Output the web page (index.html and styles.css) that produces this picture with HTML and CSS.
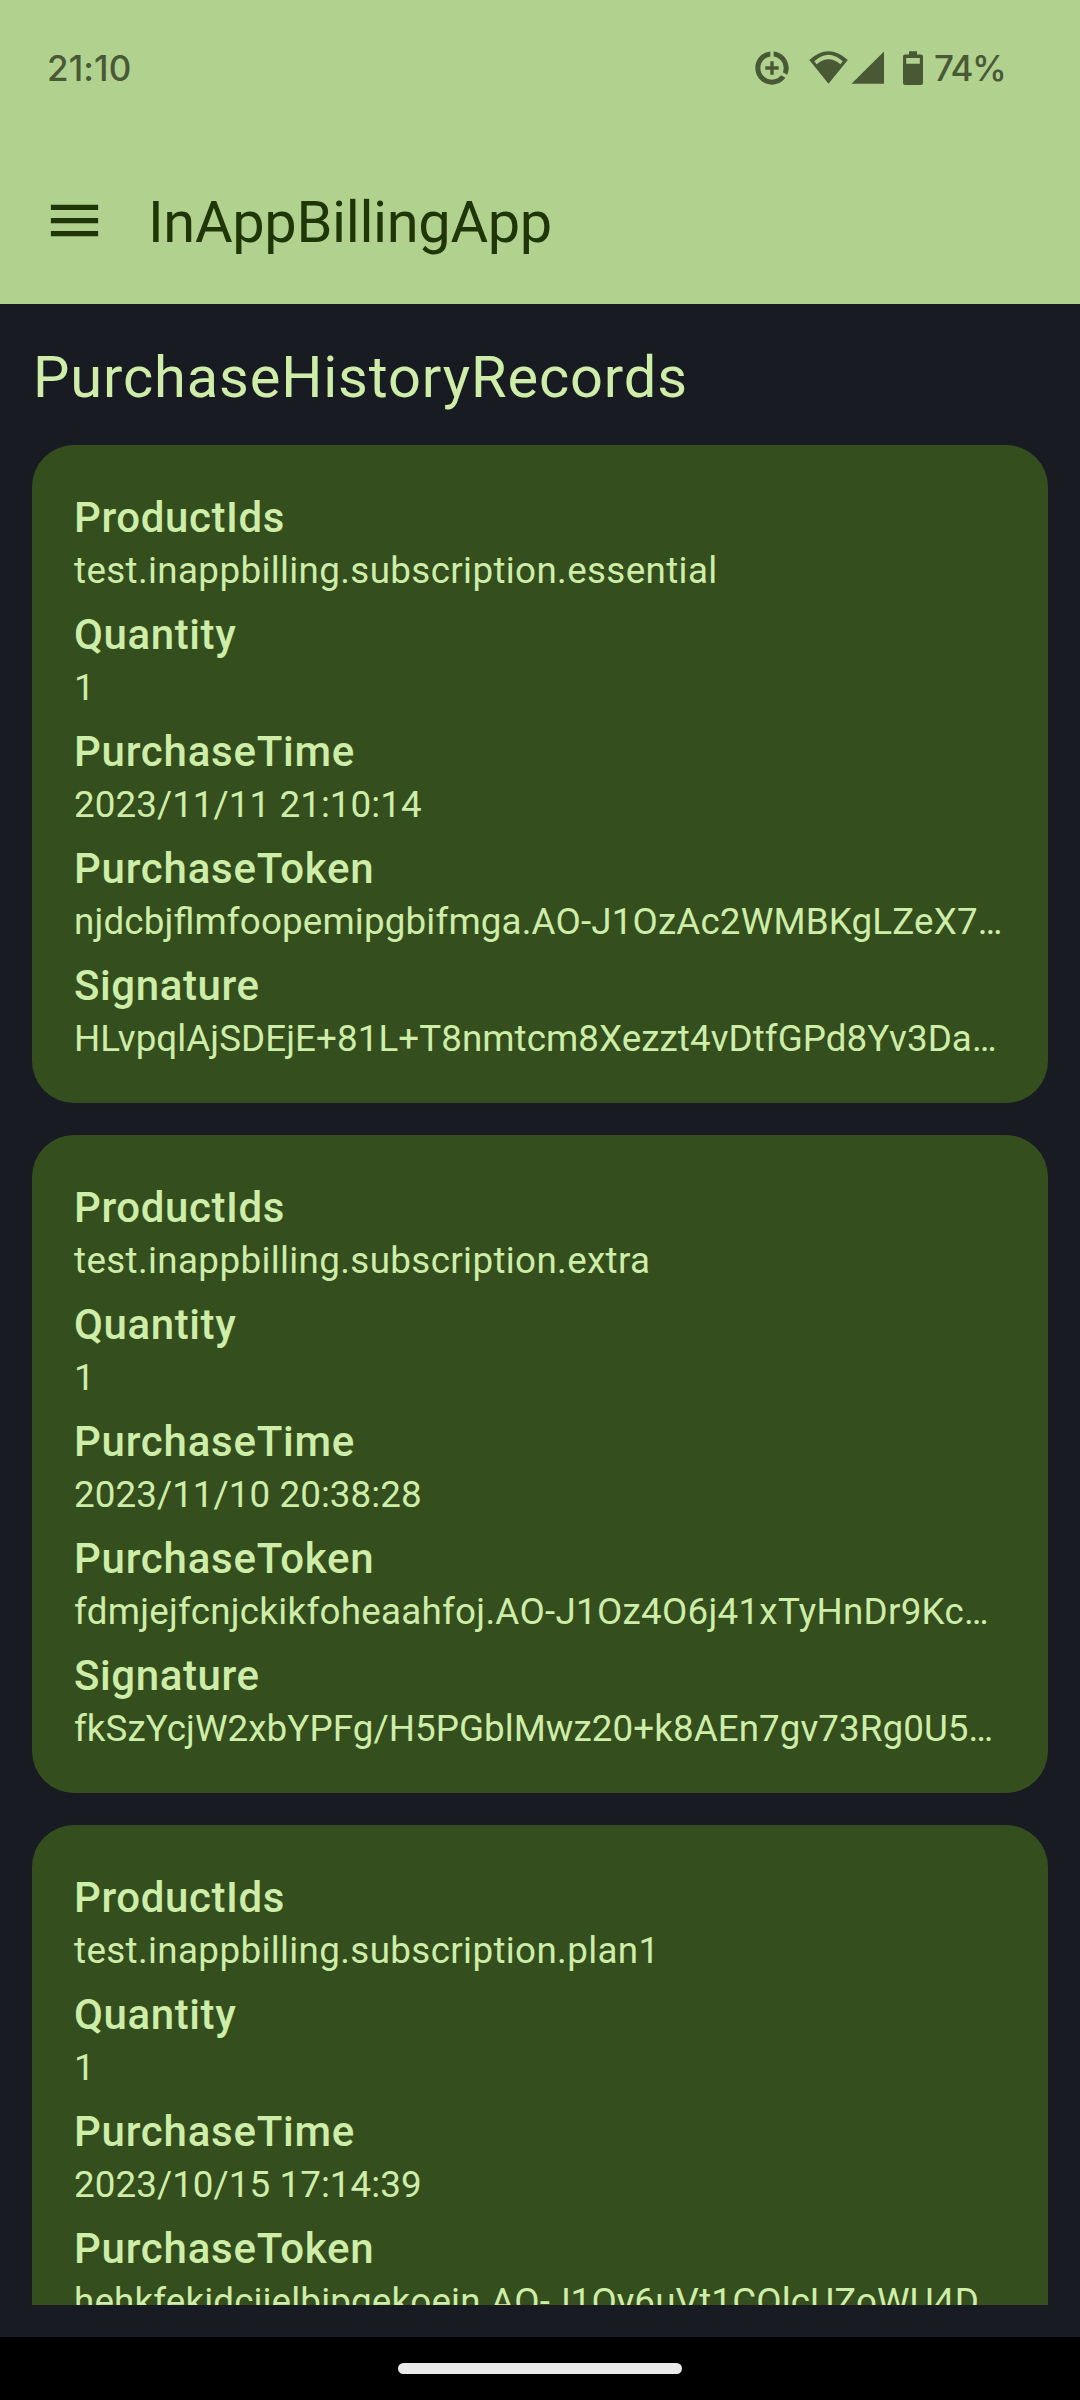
FILE: index.html
```html
<!DOCTYPE html>
<html lang="en">
<head>
<meta charset="utf-8">
<title>InAppBillingApp</title>
<link rel="stylesheet" href="styles.css">
</head>
<body>
<div class="screen">
  <header class="top">
    <div class="status">
      <span class="clock">21:10</span>
      <svg class="icon saver" viewBox="0 0 24 24" width="40" height="40"><path d="M13 2.05v3.03c3.39.49 6 3.39 6 6.92 0 .9-.18 1.75-.48 2.54l2.6 1.53c.56-1.24.88-2.62.88-4.07 0-5.18-3.95-9.45-9-9.95zM12 19c-3.87 0-7-3.13-7-7 0-3.53 2.61-6.43 6-6.92V2.05c-5.06.5-9 4.76-9 9.95 0 5.52 4.47 10 9.99 10 3.31 0 6.24-1.61 8.06-4.09l-2.6-1.53C16.17 17.98 14.21 19 12 19zM13 8h-2v3H8v2h3v3h2v-3h3v-2h-3z"/></svg>
      <svg class="icon wifi" viewBox="0 0 42 40" width="42" height="40"><path fill-rule="evenodd" d="M1.3 12Q20.5-5.4 39.8 12L20.5 35.7ZM6.3 13.2L8.7 16.2Q20.5 6.4 32.4 16.2L34.8 13.2Q20.5.2 6.3 13.2Z"/></svg>
      <svg class="icon signal" viewBox="0 0 35 40" width="35" height="40"><path d="M34 3.5V35.7H1.5Z"/></svg>
      <svg class="icon battery" viewBox="0 0 22 40" width="22" height="40"><path fill-rule="evenodd" d="M7 3.2H15V6.5H19Q21 6.5 21 8.5V35Q21 37 19 37H3Q1 37 1 35V8.5Q1 6.5 3 6.5H7ZM4.2 10V15.8H17.8V10Z"/></svg>
      <span class="percent">74%</span>
    </div>
    <div class="appbar">
      <svg class="menu" viewBox="0 0 24 24" width="63" height="63"><path d="M3 18h18v-2H3v2zm0-5h18v-2H3v2zm0-7v2h18V6H3z"/></svg>
      <h1 class="title">InAppBillingApp</h1>
    </div>
  </header>
  <main class="content">
    <h2 class="heading">PurchaseHistoryRecords</h2>
    <div class="list">
      <section class="card">
        <div class="field"><div class="label">ProductIds</div><div class="value">test.inappbilling.subscription.essential</div></div>
        <div class="field"><div class="label">Quantity</div><div class="value">1</div></div>
        <div class="field time"><div class="label">PurchaseTime</div><div class="value">2023/11/11 21:10:14</div></div>
        <div class="field token"><div class="label">PurchaseToken</div><div class="value">njdcbjflmfoopemipgbifmga.AO-J1OzAc2WMBKgLZeX7…</div></div>
        <div class="field signature"><div class="label">Signature</div><div class="value">HLvpqlAjSDEjE+81L+T8nmtcm8Xezzt4vDtfGPd8Yv3Da…</div></div>
      </section>
      <section class="card">
        <div class="field"><div class="label">ProductIds</div><div class="value">test.inappbilling.subscription.extra</div></div>
        <div class="field"><div class="label">Quantity</div><div class="value">1</div></div>
        <div class="field time"><div class="label">PurchaseTime</div><div class="value">2023/11/10 20:38:28</div></div>
        <div class="field token"><div class="label">PurchaseToken</div><div class="value loose">fdmjejfcnjckikfoheaahfoj.AO-J1Oz4O6j41xTyHnDr9Kc…</div></div>
        <div class="field signature"><div class="label">Signature</div><div class="value">fkSzYcjW2xbYPFg/H5PGblMwz20+k8AEn7gv73Rg0U5…</div></div>
      </section>
      <section class="card">
        <div class="field"><div class="label">ProductIds</div><div class="value">test.inappbilling.subscription.plan1</div></div>
        <div class="field"><div class="label">Quantity</div><div class="value">1</div></div>
        <div class="field time"><div class="label">PurchaseTime</div><div class="value">2023/10/15 17:14:39</div></div>
        <div class="field token"><div class="label">PurchaseToken</div><div class="value">hehkfekidcijelbipgekoein.AO-J1Oy6uVt1COlcUZoWU4D…</div></div>
      </section>
    </div>
  </main>
  <footer class="nav"><div class="pill"></div></footer>
</div>
</body>
</html>
```
FILE: styles.css
```css
* { box-sizing: border-box; }
body { margin: 0; font-family: Roboto, sans-serif; background: #191b23; }
.screen { width: 1080px; height: 2400px; display: flex; flex-direction: column; overflow: hidden; }
.top { flex: none; height: 304px; background: #b1d18f; }
.status { height: 136px; display: flex; align-items: center; padding-left: 47px; color: #495935; font-family: Inter, sans-serif; font-weight: 500; font-size: 35px; }
.clock { width: 705px; letter-spacing: 0.1px; }
.icon { flex: none; fill: #495935; }
.wifi { margin-left: 16px; }
.battery { margin-left: 17px; }
.percent { margin-left: 10px; letter-spacing: -1.5px; }
.appbar { height: 168px; display: flex; align-items: center; padding-left: 43px; }
.menu { flex: none; fill: #203609; }
.title { margin: 4px 0 0 42px; font-size: 57.75px; line-height: 74px; font-weight: 400; letter-spacing: -0.35px; color: #203609; }
.content { flex: none; height: 2001px; padding: 36px 32px 0; display: flex; flex-direction: column; overflow: hidden; }
.heading { flex: none; margin: 0 0 31px 1px; font-size: 57.75px; line-height: 74px; font-weight: 400; letter-spacing: 0.87px; color: #cdeda8; }
.list { display: flex; flex-direction: column; gap: 32px; }
.card { flex: none; height: 658px; padding: 45px 42px 0; border-radius: 42px; background: #354e1e; color: #cdeda8; display: flex; flex-direction: column; gap: 11px; }
.label { font-size: 42px; line-height: 56px; font-weight: 500; letter-spacing: 0.6px; }
.value { font-size: 36.75px; line-height: 50px; letter-spacing: 0.37px; white-space: nowrap; font-feature-settings: "liga"; }
.time .label, .token .label { letter-spacing: 0.75px; }
.time .value { letter-spacing: 0.07px; }
.token .value { letter-spacing: 0.16px; }
.token .loose { letter-spacing: 0.28px; }
.signature .value { letter-spacing: 0.07px; }
.nav { flex: none; height: 63px; margin-top: 32px; background: #000; display: flex; justify-content: center; padding-top: 26px; }
.pill { width: 284px; height: 11px; border-radius: 5.5px; background: #ebebeb; }
```
